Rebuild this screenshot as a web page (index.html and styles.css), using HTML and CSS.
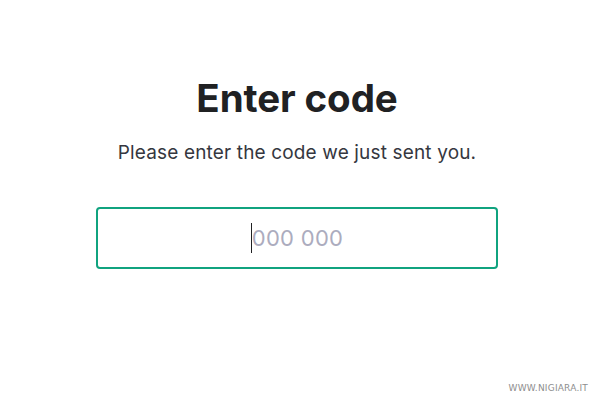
FILE: index.html
```html
<!DOCTYPE html>
<html>
<head>
<meta charset="utf-8">
<link rel="stylesheet" href="styles.css">
</head>
<body>
<main class="page">
  <h1 class="title">Enter code</h1>
  <p class="subtitle">Please enter the code we just sent you.</p>
  <div class="code-input">
    <span class="caret"></span><span class="placeholder">000 000</span>
  </div>
</main>
<div class="watermark">WWW.NIGIARA.IT</div>
</body>
</html>
```

FILE: styles.css
```css
html, body {
  margin: 0;
  padding: 0;
  background: #ffffff;
}
body {
  width: 600px;
  height: 400px;
  position: relative;
  overflow: hidden;
  font-family: Inter, "Noto Sans", sans-serif;
}
.page {
  display: flex;
  flex-direction: column;
  align-items: center;
  padding-top: 74px;
  padding-right: 6px;
}
.title {
  margin: 0;
  font-size: 38.5px;
  font-weight: 700;
  color: #202123;
  line-height: 48px;
  letter-spacing: -0.1px;
}
.subtitle {
  margin: 18px 0 0;
  font-size: 19px;
  color: #353740;
  line-height: 25px;
  letter-spacing: 0.15px;
}
.code-input {
  margin-top: 42px;
  box-sizing: border-box;
  width: 402px;
  height: 62px;
  border: 2px solid #10a37f;
  border-radius: 4px;
  display: flex;
  align-items: center;
  justify-content: center;
}
.caret {
  width: 1px;
  height: 30px;
  background: #202123;
}
.placeholder {
  font-size: 22px;
  color: #acacbe;
  letter-spacing: 0.3px;
}
.watermark {
  position: absolute;
  right: 12px;
  bottom: 7px;
  font-family: "DejaVu Sans", sans-serif;
  font-size: 9px;
  letter-spacing: 0.2px;
  color: #8e8e8e;
}
```
